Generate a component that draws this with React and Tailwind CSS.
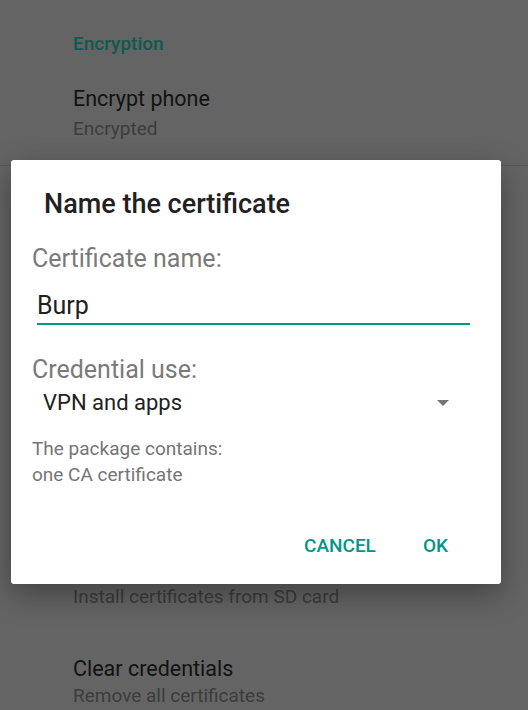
export default function App() {
  return (
    <div className="relative w-[528px] h-[710px] overflow-hidden bg-[#646464] font-['Roboto',sans-serif]">
      {/* settings list behind the scrim */}
      <div className="pl-[73px]">
        <div className="pt-[32px] text-[19px] leading-[24px] font-medium text-[#0f5a50]">Encryption</div>
        <div className="mt-[29px] text-[21.5px] leading-[28px] text-[#121212]">Encrypt phone</div>
        <div className="mt-[4px] text-[19px] leading-[24px] text-[#3c3c3c]">Encrypted</div>
      </div>
      <div className="mt-[24px] h-px bg-[#595959]" />
      <div className="pl-[73px]">
        <div className="mt-[419px] text-[19px] leading-[24px] text-[#3c3c3c]">Install certificates from SD card</div>
        <div className="mt-[46px] text-[21.5px] leading-[28px] text-[#121212]">Clear credentials</div>
        <div className="mt-[1px] text-[19px] leading-[24px] text-[#3c3c3c]">Remove all certificates</div>
      </div>

      {/* dialog */}
      <div className="absolute left-[11px] top-[160px] w-[490px] h-[424px] bg-white rounded-[3px] shadow-[0_10px_30px_rgba(0,0,0,0.35)]">
        <div className="pt-[28px] pl-[33px] text-[27px] leading-[32px] font-medium text-[#212121]">Name the certificate</div>
        <div className="mt-[24px] pl-[21px] text-[25px] leading-[30px] text-[#7a7a7a]">Certificate name:</div>
        <div className="mt-[17px] ml-[26px] mr-[31px]">
          <div className="text-[25px] leading-[30px] text-[#212121]">Burp</div>
          <div className="mt-[2px] h-[2px] bg-[#009688]" />
        </div>
        <div className="mt-[30px] pl-[21px] text-[25px] leading-[30px] text-[#7a7a7a]">Credential use:</div>
        <div className="mt-[4px] flex items-center pl-[32px] pr-[52px]">
          <div className="flex-1 text-[22px] leading-[28px] text-[#212121]">VPN and apps</div>
          <svg width="12" height="6" viewBox="0 0 12 6">
            <path d="M0 0h12L6 6z" fill="#757575" />
          </svg>
        </div>
        <div className="mt-[19px] pl-[21px] text-[19px] leading-[26px] text-[#757575]">
          <div>The package contains:</div>
          <div>one CA certificate</div>
        </div>
        <div className="mt-[46px] flex justify-end items-center gap-[47px] pr-[53px] text-[19px] leading-[24px] font-medium text-[#009688]">
          <span>CANCEL</span>
          <span>OK</span>
        </div>
      </div>
    </div>
  );
}
